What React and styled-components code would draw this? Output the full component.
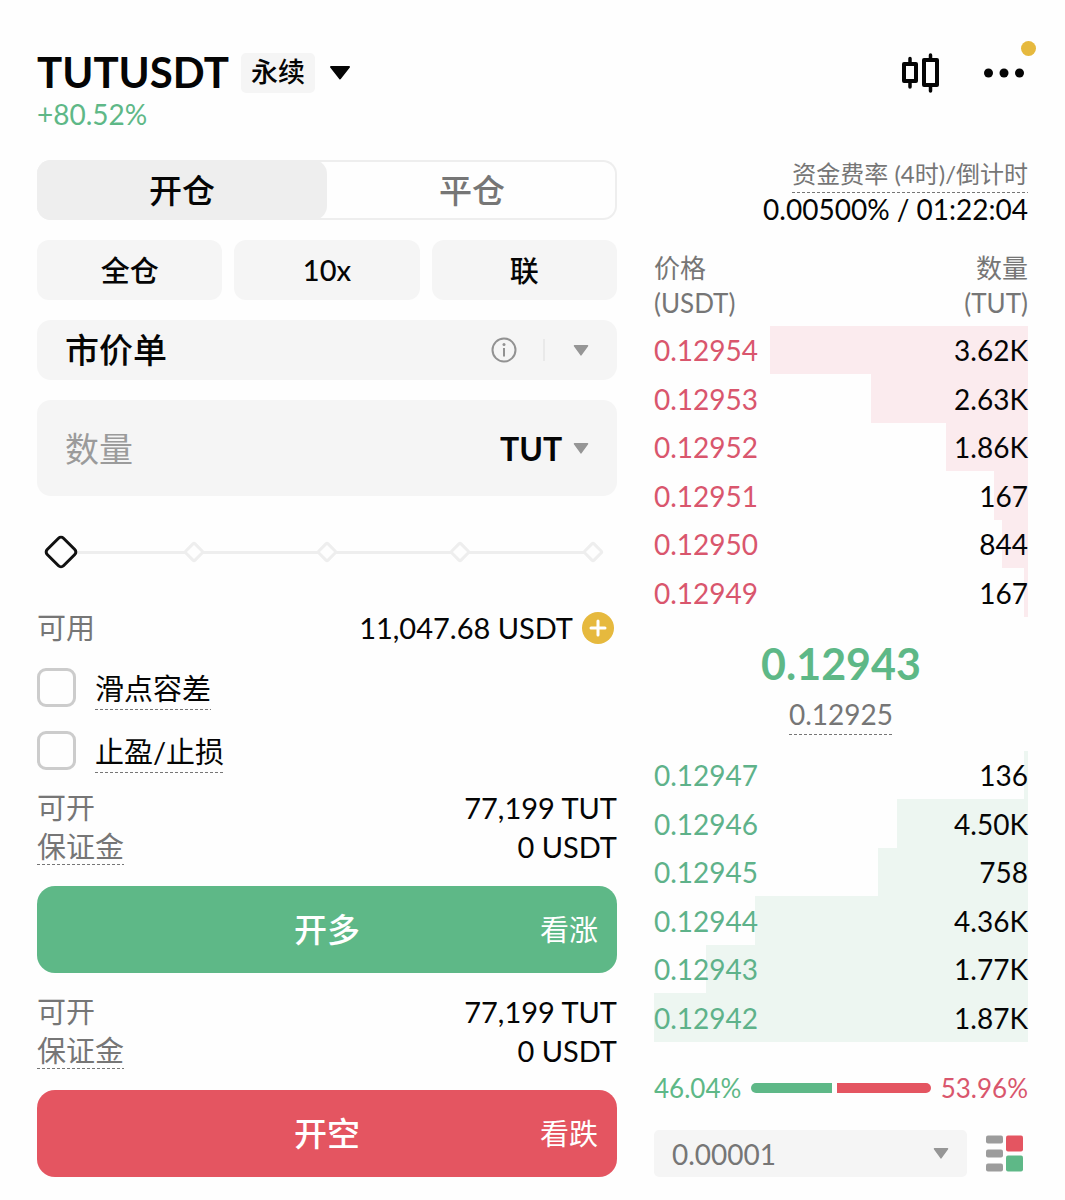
import React, { useState } from "react";
import styled, { createGlobalStyle } from "styled-components";

const GREEN = "#5eb887";
const RED = "#e45561";
const GOLD = "#e6b93e";
const GRAY = "#767676";

const GlobalStyle = createGlobalStyle`
  * {
    margin: 0;
    padding: 0;
    box-sizing: border-box;
  }

  body {
    background: #fefefe;
    color: #050505;
    font-family: Lato, "Noto Sans CJK SC", sans-serif;
    font-size: 28px;
  }

  button,
  input,
  select {
    border: 0;
    background: transparent;
    color: inherit;
    font-family: inherit;
    font-size: inherit;
  }

  select {
    appearance: none;
    outline: none;
  }

  button {
    cursor: pointer;
  }

  svg {
    display: block;
    flex: none;
  }
`;

const Page = styled.div`
  padding: 48px 37px 24px;
`;

const Header = styled.header`
  display: flex;
  justify-content: space-between;
  margin-bottom: 30px;
`;

const SymbolRow = styled.div`
  display: flex;
  align-items: center;
  height: 50px;

  h1 {
    padding-bottom: 2px;
    font-size: 42px;
    font-weight: 700;
    line-height: 48px;
  }
`;

const ContractType = styled.span`
  height: 40px;
  margin: 0 14px 0 12px;
  padding: 0 10px;
  border-radius: 5px;
  background: #f5f5f5;
  font-size: 27px;
  font-weight: 500;
  line-height: 38px;
`;

const Change = styled.p`
  color: ${GREEN};
  line-height: 32px;
`;

const HeaderActions = styled.div`
  display: flex;
  align-items: center;
  gap: 45px;
  height: 50px;
  padding-right: 4px;
`;

const IconButton = styled.button`
  position: relative;
  flex: none;
`;

const Badge = styled.span`
  position: absolute;
  top: -27px;
  right: -12px;
  width: 15px;
  height: 15px;
  border-radius: 50%;
  background: ${GOLD};
`;

const Columns = styled.main`
  display: grid;
  grid-template-columns: 580fr 374fr;
  gap: 37px;
`;

const OrderForm = styled.form`
  display: flex;
  flex-direction: column;
  font-size: 29px;
`;

const Fields = styled.div`
  display: grid;
  gap: 20px;
`;

const Tabs = styled.div`
  display: grid;
  grid-template-columns: 1fr 1fr;
  height: 60px;
  border-radius: 14px;
  box-shadow: inset 0 0 0 2px #eeeeee;
`;

const Tab = styled.button`
  padding-bottom: 2px;
  border-radius: 14px;
  background: ${(props) => (props.$active ? "#eeeeee" : "transparent")};
  color: ${(props) => (props.$active ? "#050505" : GRAY)};
  font-size: 33px;
  font-weight: 500;
`;

const Modes = styled.div`
  display: grid;
  grid-template-columns: repeat(3, 1fr);
  gap: 12px;
`;

const ModeButton = styled.button`
  height: 60px;
  padding-bottom: 2px;
  border-radius: 12px;
  background: #f5f5f5;
  font-weight: 500;
`;

const Field = styled.div`
  display: flex;
  align-items: center;
  height: ${(props) => (props.$tall ? "96px" : "60px")};
  padding: 0 28px;
  border-radius: 14px;
  background: #f5f5f5;
`;

const TypeSelect = styled.select`
  flex: 1;
  min-width: 0;
  height: 60px;
  padding-bottom: 2px;
  font-size: 34px;
  font-weight: 500;
`;

const Divider = styled.span`
  width: 2px;
  height: 22px;
  margin: 0 28px 0 26px;
  background: #e9e9e9;
`;

const AmountInput = styled.input`
  flex: 1;
  min-width: 0;
  height: 60px;
  font-size: 34px;
  outline: none;

  &::placeholder {
    color: #9b9b9b;
    opacity: 1;
  }
`;

const UnitSelect = styled.select`
  margin-right: 10px;
  font-size: 32px;
  font-weight: 700;
`;

const Slider = styled.div`
  display: grid;
  align-items: center;
  margin: 39px 11px 0;

  > * {
    grid-area: 1 / 1;
  }
`;

const Ticks = styled.div`
  display: flex;
  justify-content: space-between;
  padding: 0 5px;
  background: linear-gradient(#eeeeee, #eeeeee) center / calc(100% - 26px) 3px
    no-repeat;
`;

const Tick = styled.span`
  width: 16px;
  height: 16px;
  border: 3px solid #eeeeee;
  border-radius: 3px;
  background: #fefefe;
  transform: rotate(45deg);
`;

const Range = styled.input`
  appearance: none;
  width: 100%;
  height: 34px;

  &::-webkit-slider-thumb {
    appearance: none;
    width: 26px;
    height: 26px;
    border: 3px solid #111111;
    border-radius: 5px;
    background: #fefefe;
    transform: rotate(45deg);
  }
`;

const Row = styled.div`
  display: flex;
  align-items: center;
  justify-content: space-between;
  height: 39px;
  line-height: 36px;
`;

const Label = styled.span`
  color: ${GRAY};
`;

const Dotted = styled.span`
  padding-bottom: ${(props) => props.$space || "0"};
  background: repeating-linear-gradient(
      to right,
      ${GRAY} 0 3px,
      transparent 3px 5px
    )
    bottom / 100% 1px no-repeat;
  color: ${GRAY};
`;

const Balance = styled(Row)`
  margin-top: 39px;
  padding-right: 3px;

  div {
    display: flex;
    align-items: center;
    gap: 9px;
  }
`;

const Checks = styled.div`
  display: grid;
  gap: 24px;
  margin: 21px 0 18px;
`;

const CheckLabel = styled.label`
  display: flex;
  align-items: center;
  gap: 19px;
  height: 39px;
  line-height: 40px;

  ${Dotted} {
    padding: 3px 0 1px;
    color: #050505;
  }
`;

const Checkbox = styled.input`
  appearance: none;
  width: 39px;
  height: 39px;
  border: 3px solid #cccccc;
  border-radius: 9px;

  &:checked {
    background: ${GREEN};
  }
`;

const SubmitButton = styled.button`
  display: grid;
  grid-template-columns: 1fr auto 1fr;
  align-items: center;
  height: 87px;
  margin: 20px 0 19px;
  padding: 0 19px 3px;
  border-radius: 18px;
  background: ${(props) => (props.$short ? RED : GREEN)};
  color: #ffffff;

  &:last-child {
    margin-bottom: 0;
  }

  strong {
    grid-column: 2;
    font-size: 33px;
    font-weight: 500;
  }

  span {
    justify-self: end;
  }
`;

const Book = styled.section`
  display: flex;
  flex-direction: column;
`;

const Funding = styled.div`
  display: flex;
  flex-direction: column;
  align-items: flex-end;
  margin-bottom: 26px;
  line-height: 32px;
  white-space: nowrap;

  ${Dotted} {
    font-size: 24px;
    line-height: 27px;
  }
`;

const Table = styled.table`
  width: 100%;
  border-collapse: collapse;
  table-layout: fixed;

  th {
    padding-bottom: 5px;
    color: ${GRAY};
    font-size: 26px;
    font-weight: 400;
    line-height: 35px;
    text-align: left;
  }

  td {
    height: 48px;
    color: ${(props) => (props.$side === "ask" ? "#d9566d" : "#5eb28a")};
  }

  tr:nth-child(even) td {
    height: 49px;
  }

  th:last-child,
  td:last-child {
    text-align: right;
  }

  td:last-child {
    color: #050505;
  }
`;

const Prices = styled.div`
  display: flex;
  flex-direction: column;
  align-items: center;
  gap: 8px;
  padding: 22px 0 16px;

  strong {
    color: ${GREEN};
    font-size: 43px;
    font-weight: 700;
    line-height: 50px;
  }

  ${Dotted} {
    line-height: 34px;
  }
`;

const Ratio = styled.div`
  display: flex;
  align-items: center;
  gap: 10px;
  margin-top: 30px;
  font-size: 26px;
  line-height: 32px;
`;

const RatioText = styled.span`
  color: ${(props) => (props.$short ? "#d9566d" : GREEN)};
`;

const RatioBar = styled.div`
  display: flex;
  flex: 1;
  gap: 5px;
  height: 10px;
  border-radius: 5px;
  overflow: hidden;
`;

const RatioPart = styled.span`
  background: ${(props) => (props.$short ? RED : GREEN)};
`;

const BookFooter = styled.div`
  display: flex;
  align-items: center;
  gap: 19px;
  margin-top: 26px;
  padding-right: 5px;
`;

const PrecisionField = styled.div`
  display: flex;
  flex: 1;
  align-items: center;
  height: 47px;
  padding: 0 18px;
  border-radius: 5px;
  background: #f5f5f5;
  color: ${GRAY};

  select {
    flex: 1;
    min-width: 0;
    height: 47px;
  }
`;

// depth is the share of the row that the shaded bar covers, in percent
const asks = [
  { price: "0.12954", amount: "3.62K", depth: 69 },
  { price: "0.12953", amount: "2.63K", depth: 42 },
  { price: "0.12952", amount: "1.86K", depth: 22 },
  { price: "0.12951", amount: "167", depth: 9 },
  { price: "0.12950", amount: "844", depth: 7 },
  { price: "0.12949", amount: "167", depth: 1 },
];

const bids = [
  { price: "0.12947", amount: "136", depth: 1 },
  { price: "0.12946", amount: "4.50K", depth: 35 },
  { price: "0.12945", amount: "758", depth: 40 },
  { price: "0.12944", amount: "4.36K", depth: 73 },
  { price: "0.12943", amount: "1.77K", depth: 86 },
  { price: "0.12942", amount: "1.87K", depth: 100 },
];

const Caret = ({ color = "#969696", width = 16, height = 11 }) => (
  <svg width={width} height={height} viewBox="0 0 22 14" preserveAspectRatio="none">
    <path
      d="M2 1h18L11 12.5z"
      fill={color}
      stroke={color}
      strokeWidth="2"
      strokeLinejoin="round"
    />
  </svg>
);

const CandlesIcon = () => (
  <svg width="38" height="40" viewBox="0 0 38 40" fill="none" stroke="#050505">
    <g strokeWidth="4" strokeLinejoin="round">
      <rect x="3" y="11" width="12" height="17" />
      <rect x="23" y="7" width="13" height="25" />
    </g>
    <path
      d="M9 5.500v5M9 29v5M29.500 2v5M29.500 33v5"
      strokeWidth="3.500"
      strokeLinecap="round"
    />
  </svg>
);

const DotsIcon = () => (
  <svg width="40" height="10" viewBox="0 0 40 10" fill="#050505">
    <circle cx="4.500" cy="5" r="4.500" />
    <circle cx="20" cy="5" r="4.500" />
    <circle cx="35.500" cy="5" r="4.500" />
  </svg>
);

const InfoIcon = () => (
  <svg width="26" height="26" viewBox="0 0 26 26" fill="none" stroke="#929292">
    <circle cx="13" cy="13" r="11.500" strokeWidth="2" />
    <path d="M13 11v8.500" strokeWidth="2" />
    <circle cx="13" cy="7.500" r="1.500" fill="#929292" stroke="none" />
  </svg>
);

const PlusIcon = () => (
  <svg width="32" height="32" viewBox="0 0 32 32">
    <circle cx="16" cy="16" r="16" fill={GOLD} />
    <path
      d="M9 16h14M16 9v14"
      stroke="#fff"
      strokeWidth="3"
      strokeLinecap="round"
    />
  </svg>
);

const BookIcon = () => (
  <svg width="37" height="37" viewBox="0 0 37 37">
    <g fill="#9c9c9c">
      <rect y="0.500" width="17" height="8" rx="2" />
      <rect y="14.500" width="17" height="8" rx="2" />
      <rect y="28.500" width="17" height="8" rx="2" />
    </g>
    <rect x="20" y="0.500" width="17" height="16" rx="2" fill={RED} />
    <rect x="20" y="20.500" width="17" height="16" rx="2" fill={GREEN} />
  </svg>
);

const DepthRows = ({ rows, color }) => (
  <tbody>
    {rows.map(({ price, amount, depth }) => (
      <tr
        key={price}
        style={{
          background: `linear-gradient(to left, ${color} ${depth}%, transparent ${depth}%)`,
        }}
      >
        <td>{price}</td>
        <td>{amount}</td>
      </tr>
    ))}
  </tbody>
);

const OrderLimits = () => (
  <div>
    <Row>
      <Label>可开</Label>
      <span>77,199 TUT</span>
    </Row>
    <Row>
      <Dotted>保证金</Dotted>
      <span>0 USDT</span>
    </Row>
  </div>
);

const App = () => {
  const [tab, setTab] = useState("open");
  const [percent, setPercent] = useState(0);

  return (
    <Page>
      <GlobalStyle />
      <Header>
        <div>
          <SymbolRow>
            <h1>TUTUSDT</h1>
            <ContractType>永续</ContractType>
            <IconButton aria-label="选择合约">
              <Caret color="#050505" width={22} height={14} />
            </IconButton>
          </SymbolRow>
          <Change>+80.52%</Change>
        </div>
        <HeaderActions>
          <IconButton aria-label="图表">
            <CandlesIcon />
          </IconButton>
          <IconButton aria-label="更多">
            <DotsIcon />
            <Badge />
          </IconButton>
        </HeaderActions>
      </Header>

      <Columns>
        <OrderForm onSubmit={(e) => e.preventDefault()}>
          <Fields>
            <Tabs>
              <Tab
                type="button"
                $active={tab === "open"}
                onClick={() => setTab("open")}
              >
                开仓
              </Tab>
              <Tab
                type="button"
                $active={tab === "close"}
                onClick={() => setTab("close")}
              >
                平仓
              </Tab>
            </Tabs>
            <Modes>
              <ModeButton type="button">全仓</ModeButton>
              <ModeButton type="button">10x</ModeButton>
              <ModeButton type="button">联</ModeButton>
            </Modes>
            <Field>
              <TypeSelect aria-label="订单类型">
                <option>市价单</option>
              </TypeSelect>
              <IconButton type="button" aria-label="说明">
                <InfoIcon />
              </IconButton>
              <Divider />
              <Caret />
            </Field>
            <Field $tall>
              <AmountInput aria-label="数量" placeholder="数量" />
              <UnitSelect aria-label="单位">
                <option>TUT</option>
              </UnitSelect>
              <Caret />
            </Field>
          </Fields>

          <Slider>
            <Ticks>
              <Tick />
              <Tick />
              <Tick />
              <Tick />
              <Tick />
            </Ticks>
            <Range
              type="range"
              aria-label="仓位比例"
              min="0"
              max="100"
              value={percent}
              onChange={(e) => setPercent(Number(e.target.value))}
            />
          </Slider>

          <Balance>
            <Label>可用</Label>
            <div>
              <span>11,047.68 USDT</span>
              <IconButton type="button" aria-label="充值">
                <PlusIcon />
              </IconButton>
            </div>
          </Balance>

          <Checks>
            <CheckLabel>
              <Checkbox type="checkbox" />
              <Dotted>滑点容差</Dotted>
            </CheckLabel>
            <CheckLabel>
              <Checkbox type="checkbox" />
              <Dotted>止盈/止损</Dotted>
            </CheckLabel>
          </Checks>

          <OrderLimits />
          <SubmitButton>
            <strong>开多</strong>
            <span>看涨</span>
          </SubmitButton>
          <OrderLimits />
          <SubmitButton $short>
            <strong>开空</strong>
            <span>看跌</span>
          </SubmitButton>
        </OrderForm>

        <Book>
          <Funding>
            <Dotted $space="6px">资金费率 (4时)/倒计时</Dotted>
            <span>0.00500% / 01:22:04</span>
          </Funding>

          <Table $side="ask">
            <thead>
              <tr>
                <th>
                  价格
                  <br />
                  (USDT)
                </th>
                <th>
                  数量
                  <br />
                  (TUT)
                </th>
              </tr>
            </thead>
            <DepthRows rows={asks} color="#fbebee" />
          </Table>

          <Prices>
            <strong>0.12943</strong>
            <Dotted $space="4px">0.12925</Dotted>
          </Prices>

          <Table $side="bid">
            <DepthRows rows={bids} color="#edf6f1" />
          </Table>

          <Ratio>
            <RatioText>46.04%</RatioText>
            <RatioBar>
              <RatioPart style={{ flexGrow: 46.04 }} />
              <RatioPart $short style={{ flexGrow: 53.96 }} />
            </RatioBar>
            <RatioText $short>53.96%</RatioText>
          </Ratio>

          <BookFooter>
            <PrecisionField>
              <select aria-label="价格精度">
                <option>0.00001</option>
              </select>
              <Caret />
            </PrecisionField>
            <IconButton aria-label="盘口显示">
              <BookIcon />
            </IconButton>
          </BookFooter>
        </Book>
      </Columns>
    </Page>
  );
};

export default App;
